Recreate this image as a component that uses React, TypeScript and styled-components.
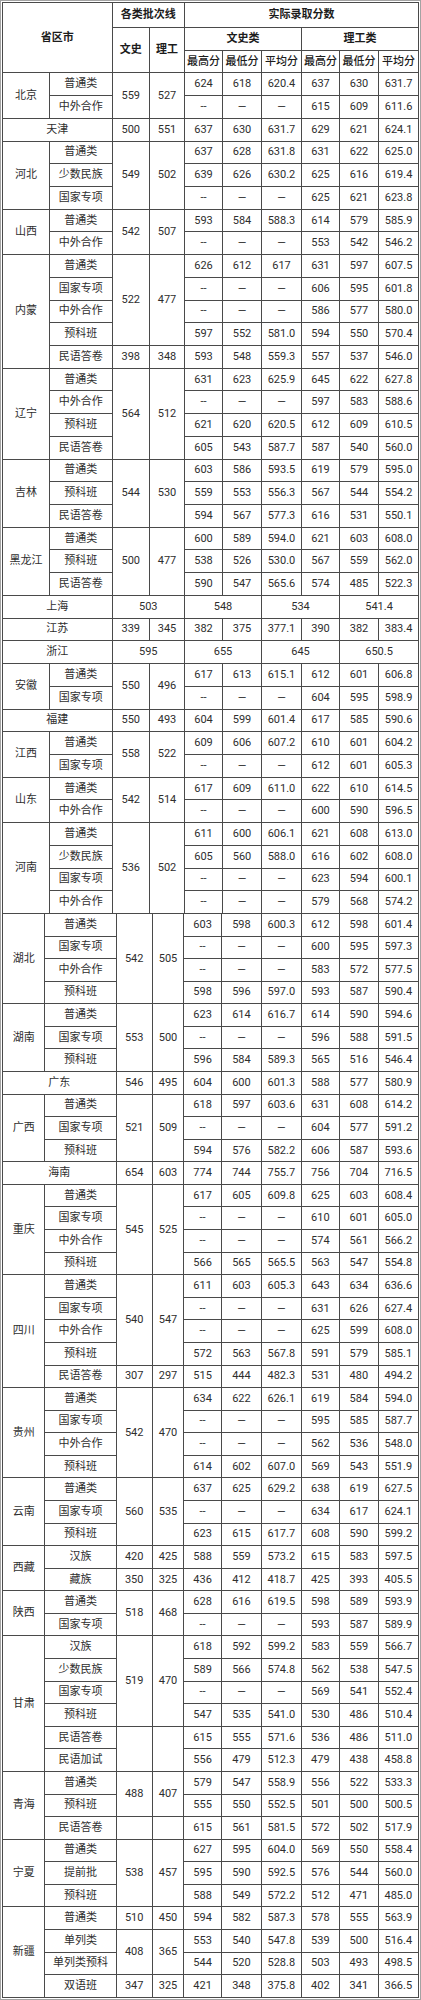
import React from "react";
import styled, { createGlobalStyle } from "styled-components";

const Global = createGlobalStyle`
  html, body { margin: 0; padding: 0; background: #fff; }
  body { font-family: Roboto, "Noto Sans CJK SC", sans-serif; }
`;

const Frame = styled.div`
  width: 421px;
  box-sizing: border-box;
  border: 1px solid #a3a3a3;
  padding: 1px;
  background: #fff;
`;

const Table = styled.table<{ $follow?: boolean }>`
  width: 100%;
  table-layout: fixed;
  border-collapse: collapse;
  margin-top: ${(p) => (p.$follow ? -1 : 0)}px;
  font-size: 11px;
  color: #2e2e2e;
`;

const Col = styled.col<{ $w: number }>`
  width: ${(p) => p.$w}px;
`;

const Row = styled.tr<{ $h: number }>`
  height: ${(p) => p.$h}px;
`;

const Cell = styled.td`
  border: 1px solid #4a4a4a;
  padding: 0;
  text-align: center;
  vertical-align: middle;
  line-height: 14px;
  white-space: nowrap;
  overflow: hidden;
  font-family: Roboto, "Noto Sans CJK SC", sans-serif;
`;

const Head = styled.th<{ $light?: boolean }>`
  border: 1px solid #4a4a4a;
  padding: 0;
  text-align: center;
  vertical-align: middle;
  line-height: 14px;
  white-space: nowrap;
  font-family: Roboto, "Noto Sans CJK SC", sans-serif;
  font-weight: ${(p) => (p.$light ? 500 : 700)};
  color: #1c1c1c;
`;

type Sub = [string, string | null, string];
type Prov = { n: string; s?: Sub[]; one?: string; wide?: string };
type C = { t: string; r?: number; c?: number };

const PART1: Prov[] = [
  { n: "北京", s: [["普通类", "559 527 2", "624 618 620.4 637 630 631.7"], ["中外合作", null, "~ 615 609 611.6"]] },
  { n: "天津", one: "500 551 637 630 631.7 629 621 624.1" },
  {
    n: "河北",
    s: [
      ["普通类", "549 502 3", "637 628 631.8 631 622 625.0"],
      ["少数民族", null, "639 626 630.2 625 616 619.4"],
      ["国家专项", null, "~ 625 621 623.8"],
    ],
  },
  { n: "山西", s: [["普通类", "542 507 2", "593 584 588.3 614 579 585.9"], ["中外合作", null, "~ 553 542 546.2"]] },
  {
    n: "内蒙",
    s: [
      ["普通类", "522 477 4", "626 612 617 631 597 607.5"],
      ["国家专项", null, "~ 606 595 601.8"],
      ["中外合作", null, "~ 586 577 580.0"],
      ["预科班", null, "597 552 581.0 594 550 570.4"],
      ["民语答卷", "398 348 1", "593 548 559.3 557 537 546.0"],
    ],
  },
  {
    n: "辽宁",
    s: [
      ["普通类", "564 512 4", "631 623 625.9 645 622 627.8"],
      ["中外合作", null, "~ 597 583 588.6"],
      ["预科班", null, "621 620 620.5 612 609 610.5"],
      ["民语答卷", null, "605 543 587.7 587 540 560.0"],
    ],
  },
  {
    n: "吉林",
    s: [
      ["普通类", "544 530 3", "603 586 593.5 619 579 595.0"],
      ["预科班", null, "559 553 556.3 567 544 554.2"],
      ["民语答卷", null, "594 567 577.3 616 531 550.1"],
    ],
  },
  {
    n: "黑龙江",
    s: [
      ["普通类", "500 477 3", "600 589 594.0 621 603 608.0"],
      ["预科班", null, "538 526 530.0 567 559 562.0"],
      ["民语答卷", null, "590 547 565.6 574 485 522.3"],
    ],
  },
  { n: "上海", wide: "503 548 534 541.4" },
  { n: "江苏", one: "339 345 382 375 377.1 390 382 383.4" },
  { n: "浙江", wide: "595 655 645 650.5" },
  { n: "安徽", s: [["普通类", "550 496 2", "617 613 615.1 612 601 606.8"], ["国家专项", null, "~ 604 595 598.9"]] },
  { n: "福建", one: "550 493 604 599 601.4 617 585 590.6" },
  { n: "江西", s: [["普通类", "558 522 2", "609 606 607.2 610 601 604.2"], ["国家专项", null, "~ 612 601 605.3"]] },
  { n: "山东", s: [["普通类", "542 514 2", "617 609 611.0 622 610 614.5"], ["中外合作", null, "~ 600 590 596.5"]] },
  {
    n: "河南",
    s: [
      ["普通类", "536 502 4", "611 600 606.1 621 608 613.0"],
      ["少数民族", null, "605 560 588.0 616 602 608.0"],
      ["国家专项", null, "~ 623 594 600.1"],
      ["中外合作", null, "~ 579 568 574.2"],
    ],
  },
];

const PART2: Prov[] = [
  {
    n: "湖北",
    s: [
      ["普通类", "542 505 4", "603 598 600.3 612 598 601.4"],
      ["国家专项", null, "~ 600 595 597.3"],
      ["中外合作", null, "~ 583 572 577.5"],
      ["预科班", null, "598 596 597.0 593 587 590.4"],
    ],
  },
  {
    n: "湖南",
    s: [
      ["普通类", "553 500 3", "623 614 616.7 614 590 594.6"],
      ["国家专项", null, "~ 596 588 591.5"],
      ["预科班", null, "596 584 589.3 565 516 546.4"],
    ],
  },
  { n: "广东", one: "546 495 604 600 601.3 588 577 580.9" },
  {
    n: "广西",
    s: [
      ["普通类", "521 509 3", "618 597 603.6 631 608 614.2"],
      ["国家专项", null, "~ 604 577 591.2"],
      ["预科班", null, "594 576 582.2 606 587 593.6"],
    ],
  },
  { n: "海南", one: "654 603 774 744 755.7 756 704 716.5" },
  {
    n: "重庆",
    s: [
      ["普通类", "545 525 4", "617 605 609.8 625 603 608.4"],
      ["国家专项", null, "~ 610 601 605.0"],
      ["中外合作", null, "~ 574 561 566.2"],
      ["预科班", null, "566 565 565.5 563 547 554.8"],
    ],
  },
  {
    n: "四川",
    s: [
      ["普通类", "540 547 4", "611 603 605.3 643 634 636.6"],
      ["国家专项", null, "~ 631 626 627.4"],
      ["中外合作", null, "~ 625 599 608.0"],
      ["预科班", null, "572 563 567.8 591 579 585.1"],
      ["民语答卷", "307 297 1", "515 444 482.3 531 480 494.2"],
    ],
  },
  {
    n: "贵州",
    s: [
      ["普通类", "542 470 4", "634 622 626.1 619 584 594.0"],
      ["国家专项", null, "~ 595 585 587.7"],
      ["中外合作", null, "~ 562 536 548.0"],
      ["预科班", null, "614 602 607.0 569 543 551.9"],
    ],
  },
  {
    n: "云南",
    s: [
      ["普通类", "560 535 3", "637 625 629.2 638 619 627.5"],
      ["国家专项", null, "~ 634 617 624.1"],
      ["预科班", null, "623 615 617.7 608 590 599.2"],
    ],
  },
  {
    n: "西藏",
    s: [
      ["汉族", "420 425 1", "588 559 573.2 615 583 597.5"],
      ["藏族", "350 325 1", "436 412 418.7 425 393 405.5"],
    ],
  },
  { n: "陕西", s: [["普通类", "518 468 2", "628 616 619.5 598 589 593.9"], ["国家专项", null, "~ 593 587 589.9"]] },
  {
    n: "甘肃",
    s: [
      ["汉族", "519 470 4", "618 592 599.2 583 559 566.7"],
      ["少数民族", null, "589 566 574.8 562 538 547.5"],
      ["国家专项", null, "~ 569 541 552.4"],
      ["预科班", null, "547 535 541.0 530 486 510.4"],
      ["民语答卷", "_ _ 2", "615 555 571.6 536 486 511.0"],
      ["民语加试", null, "556 479 512.3 479 438 458.8"],
    ],
  },
  {
    n: "青海",
    s: [
      ["普通类", "488 407 2", "579 547 558.9 556 522 533.3"],
      ["预科班", null, "555 550 552.5 501 500 500.5"],
      ["民语答卷", "_ _ 1", "615 561 581.5 572 502 517.9"],
    ],
  },
  {
    n: "宁夏",
    s: [
      ["普通类", "538 457 3", "627 595 604.0 569 550 558.4"],
      ["提前批", null, "595 590 592.5 576 544 560.0"],
      ["预科班", null, "588 549 572.2 512 471 485.0"],
    ],
  },
  {
    n: "新疆",
    s: [
      ["普通类", "510 450 1", "594 582 587.3 578 555 563.9"],
      ["单列类", "408 365 2", "553 540 547.8 539 500 516.4"],
      ["单列类预科", null, "544 520 528.8 503 493 498.5"],
      ["双语班", "347 325 1", "421 348 375.8 402 341 366.5"],
    ],
  },
];

const tok = (s: string): string[] =>
  s
    .split(" ")
    .flatMap((t) => (t === "~" ? ["--", "—", "—"] : [t === "_" ? "" : t]));

function build(list: Prov[]): C[][] {
  const rows: C[][] = [];
  list.forEach((p) => {
    if (p.one) {
      rows.push([{ t: p.n, c: 2 }, ...tok(p.one).map((t) => ({ t }))]);
    } else if (p.wide) {
      rows.push([{ t: p.n, c: 2 }, ...tok(p.wide).map((t) => ({ t, c: 2 }))]);
    } else if (p.s) {
      p.s.forEach(([sub, bat, vals], i) => {
        const cells: C[] = [];
        if (i === 0) cells.push({ t: p.n, r: p.s!.length });
        cells.push({ t: sub });
        if (bat) {
          const [a, b, n] = tok(bat);
          cells.push({ t: a, r: Number(n) }, { t: b, r: Number(n) });
        }
        tok(vals).forEach((t) => cells.push({ t }));
        rows.push(cells);
      });
    }
  });
  return rows;
}

const COLS1 = [47, 62.5, 37.5, 35, 38, 39, 40, 38, 39, 40];
const COLS2 = [42.3, 71.4, 36, 31.6, 37.7, 40, 39.7, 38.3, 38.7, 40.3];

const Body: React.FC<{ rows: C[][]; h: number }> = ({ rows, h }) => (
  <tbody>
    {rows.map((r, i) => (
      <Row key={i} $h={h}>
        {r.map((c, j) => (
          <Cell key={j} rowSpan={c.r} colSpan={c.c}>
            {c.t}
          </Cell>
        ))}
      </Row>
    ))}
  </tbody>
);

const Cols: React.FC<{ w: number[] }> = ({ w }) => (
  <colgroup>
    {w.map((x, i) => (
      <Col key={i} $w={x} />
    ))}
  </colgroup>
);

export default function App() {
  const rows1 = build(PART1);
  const rows2 = build(PART2);
  return (
    <>
      <Global />
      <Frame>
        <Table>
          <Cols w={COLS1} />
          <thead>
            <Row $h={25.4}>
              <Head rowSpan={3} colSpan={2}>
                省区市
              </Head>
              <Head colSpan={2}>各类批次线</Head>
              <Head colSpan={6}>实际录取分数</Head>
            </Row>
            <Row $h={22.6}>
              <Head rowSpan={2}>文史</Head>
              <Head rowSpan={2}>理工</Head>
              <Head colSpan={3}>文史类</Head>
              <Head colSpan={3}>理工类</Head>
            </Row>
            <Row $h={22.4}>
              {["最高分", "最低分", "平均分", "最高分", "最低分", "平均分"].map((t, i) => (
                <Head key={i} $light>
                  {t}
                </Head>
              ))}
            </Row>
          </thead>
          <Body rows={rows1} h={22.73} />
        </Table>
        <Table $follow>
          <Cols w={COLS2} />
          <Body rows={rows2} h={22.58} />
        </Table>
      </Frame>
    </>
  );
}
